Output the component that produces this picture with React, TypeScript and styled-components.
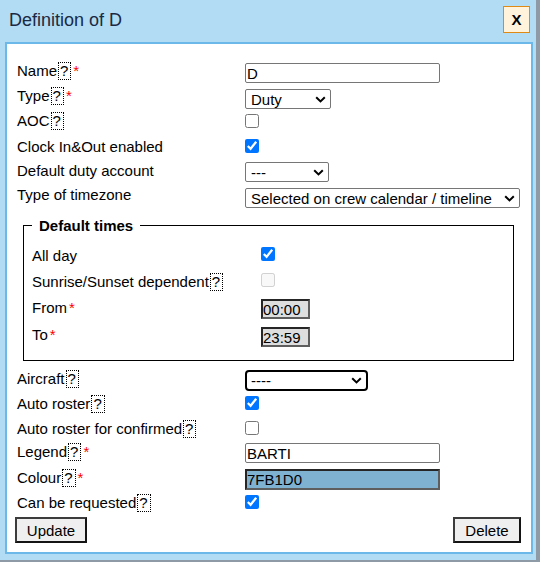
import styled, { createGlobalStyle } from 'styled-components';

function Chevron() {
  return (
    <svg width="11" height="7" viewBox="0 0 11 7">
      <path d="M1.2 1.2 L5.5 5.4 L9.8 1.2" fill="none" stroke="#000" strokeWidth="2" />
    </svg>
  );
}

function FieldLabel(props: { text: string; help?: boolean; req?: boolean }) {
  const { text, help, req } = props;
  return (
    <Label>
      {text}
      {help ? <Help>?</Help> : <></>}
      {req ? <Req>*</Req> : <></>}
    </Label>
  );
}

function App() {
  return (
    <>
      <GlobalStyle />
      <Dialog>
        <Header>
          <Title>Definition of D</Title>
          <CloseButton>X</CloseButton>
        </Header>
        <Panel>
          <Row $h={25}>
            <FieldLabel text="Name" help req />
            <Cell $off={1}><TextInput $w={195} defaultValue="D" /></Cell>
          </Row>
          <Row $h={25}>
            <FieldLabel text="Type" help req />
            <Cell $off={2}><SelectBox $w={86}>Duty<Chevron /></SelectBox></Cell>
          </Row>
          <Row $h={26}>
            <FieldLabel text="AOC" help />
            <Cell $off={2}><Check /></Cell>
          </Row>
          <Row $h={24}>
            <FieldLabel text="Clock In&Out enabled" />
            <Cell $off={1}><Check defaultChecked /></Cell>
          </Row>
          <Row $h={24}>
            <FieldLabel text="Default duty account" />
            <Cell $off={0}><SelectBox $w={84}>---<Chevron /></SelectBox></Cell>
          </Row>
          <Row $h={24}>
            <FieldLabel text="Type of timezone" />
            <Cell $off={2}>
              <SelectBox $w={275}>Selected on crew calendar / timeline<Chevron /></SelectBox>
            </Cell>
          </Row>

          <TimesBox>
            <TimesLegend>Default times</TimesLegend>
            <Row $h={26} $col={229}>
              <FieldLabel text="All day" />
              <Cell $off={0}><Check defaultChecked /></Cell>
            </Row>
            <Row $h={26} $col={229}>
              <FieldLabel text="Sunrise/Sunset dependent" help />
              <Cell $off={0}><Check disabled /></Cell>
            </Row>
            <Row $h={27} $col={229}>
              <FieldLabel text="From" req />
              <Cell $off={0}><SunkenInput $w={49} $h={20} $bg="#dedede" defaultValue="00:00" /></Cell>
            </Row>
            <Row $h={26} $col={229}>
              <FieldLabel text="To" req />
              <Cell $off={1}><SunkenInput $w={49} $h={20} $bg="#dedede" defaultValue="23:59" /></Cell>
            </Row>
          </TimesBox>

          <Row $h={25}>
            <FieldLabel text="Aircraft" help />
            <Cell $off={0}><SelectBox $w={123} $strong>----<Chevron /></SelectBox></Cell>
          </Row>
          <Row $h={25}>
            <FieldLabel text="Auto roster" help />
            <Cell $off={1}><Check defaultChecked /></Cell>
          </Row>
          <Row $h={23}>
            <FieldLabel text="Auto roster for confirmed" help />
            <Cell $off={1}><Check /></Cell>
          </Row>
          <Row $h={26}>
            <FieldLabel text="Legend" help req />
            <Cell $off={0}><TextInput $w={195} defaultValue="BARTI" /></Cell>
          </Row>
          <Row $h={25}>
            <FieldLabel text="Colour" help req />
            <Cell $off={0}><SunkenInput $w={195} $h={21} $bg="#7fb1d0" defaultValue="7FB1D0" /></Cell>
          </Row>
          <Row $h={23}>
            <FieldLabel text="Can be requested" help />
            <Cell $off={1}><Check defaultChecked /></Cell>
          </Row>

          <ButtonRow>
            <Button $w={72}>Update</Button>
            <Button $w={68}>Delete</Button>
          </ButtonRow>
        </Panel>
      </Dialog>
    </>
  );
}
export default App;

const GlobalStyle = createGlobalStyle`
  html, body {
    margin: 0;
    padding: 0;
    background: #b1dcf3;
  }
  body {
    font-family: "Liberation Sans", Arial, sans-serif;
    color: #000;
  }
`;

const Dialog = styled.div`
  width: 540px;
  height: 562px;
  box-sizing: border-box;
  background: #b1dcf3;
  border-right: 4px solid #8e9ba6;
  border-bottom: 2px solid #8e9ba6;
  display: flex;
  flex-direction: column;
`;

const Header = styled.div`
  height: 42px;
  box-sizing: border-box;
  padding: 6px 6px 0 9px;
  display: flex;
  justify-content: space-between;
  align-items: flex-start;
`;

const Title = styled.div`
  margin-top: 3px;
  font-size: 18px;
  line-height: 22px;
  color: #1b2a44;
`;

const CloseButton = styled.button`
  width: 27px;
  height: 27px;
  box-sizing: border-box;
  padding: 0;
  border: 1px solid #e08a16;
  background: #fff3dc;
  font-family: "Liberation Sans", Arial, sans-serif;
  font-weight: bold;
  font-size: 15px;
  color: #000;
  display: flex;
  align-items: center;
  justify-content: center;
`;

const Panel = styled.div`
  margin-left: 5px;
  width: 528px;
  height: 512px;
  box-sizing: border-box;
  background: #fff;
  border: 2px solid #6bb8e9;
  padding: 18px 10px 0 10px;
  display: flex;
  flex-direction: column;
`;

const Row = styled.div<{ $h: number; $col?: number }>`
  display: grid;
  grid-template-columns: ${(props) => props.$col ?? 228}px 1fr;
  align-items: start;
  height: ${(props) => props.$h}px;
  flex-shrink: 0;
`;

const Label = styled.div`
  font-size: 15px;
  line-height: 17px;
  white-space: nowrap;
  color: #000;
`;

const Help = styled.span`
  display: inline-block;
  margin-left: 1px;
  border: 1px dotted #000;
  line-height: 16px;
  padding: 0 2px 0 1px;
`;

const Req = styled.span`
  color: #f00;
  margin-left: 2px;
`;

const Cell = styled.div<{ $off: number }>`
  padding-top: ${(props) => props.$off}px;
  display: flex;
  align-items: flex-start;
`;

const TextInput = styled.input<{ $w: number }>`
  width: ${(props) => props.$w}px;
  height: 20px;
  box-sizing: border-box;
  margin: 0;
  padding: 0 1px;
  border: 1px solid #767676;
  border-radius: 2px;
  background: #fff;
  font-family: "Liberation Sans", Arial, sans-serif;
  font-size: 15px;
  color: #000;
  outline: none;
`;

const SunkenInput = styled.input<{ $w: number; $h: number; $bg: string }>`
  width: ${(props) => props.$w}px;
  height: ${(props) => props.$h}px;
  box-sizing: border-box;
  margin: 0;
  padding: 0;
  border-width: 2px;
  border-style: solid;
  border-color: #262626 #5e5e5e #5e5e5e #262626;
  background: ${(props) => props.$bg};
  font-family: "Liberation Sans", Arial, sans-serif;
  font-size: 15px;
  color: #000;
  outline: none;
`;

const SelectBox = styled.div<{ $w: number; $strong?: boolean }>`
  width: ${(props) => props.$w}px;
  height: ${(props) => (props.$strong ? 21 : 20)}px;
  box-sizing: border-box;
  border: ${(props) => (props.$strong ? '2px solid #000' : '1px solid #767676')};
  border-radius: ${(props) => (props.$strong ? 4 : 2)}px;
  padding: ${(props) => (props.$strong ? '0 4px 0 4px' : '0 4px 0 5px')};
  background: #fff;
  display: flex;
  align-items: center;
  justify-content: space-between;
  font-size: 15px;
  line-height: 17px;
  white-space: nowrap;
`;

const Check = styled.input.attrs({ type: 'checkbox' })`
  width: 14px;
  height: 14px;
  margin: 0;
`;

const TimesBox = styled.fieldset`
  width: 491px;
  box-sizing: border-box;
  margin: 7px 0 9px 6px;
  padding: 13px 0 8px 8px;
  border: 1px solid #000;
  min-inline-size: 0;
  flex-shrink: 0;
`;

const TimesLegend = styled.legend`
  margin-left: 0;
  padding: 0 7px;
  font-size: 15px;
  line-height: 17px;
  font-weight: bold;
`;

const ButtonRow = styled.div`
  margin-left: -2px;
  display: flex;
  justify-content: space-between;
`;

const Button = styled.button<{ $w: number }>`
  width: ${(props) => props.$w}px;
  height: 26px;
  box-sizing: border-box;
  padding: 0;
  border-width: 2px;
  border-style: solid;
  border-color: #3c3c3c #141414 #141414 #3c3c3c;
  background: #efefef;
  font-family: "Liberation Sans", Arial, sans-serif;
  font-size: 15px;
  color: #000;
`;
